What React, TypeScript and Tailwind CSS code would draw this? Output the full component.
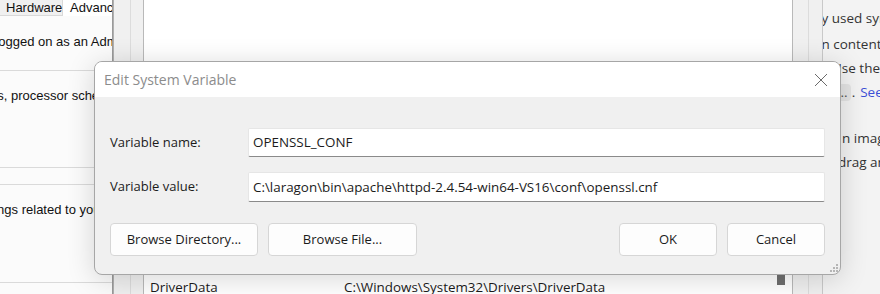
import React from "react";

const ui = { fontFamily: '"Open Sans", "Noto Sans", sans-serif' };
const classic = { fontFamily: '"Liberation Sans", Arial, sans-serif' };

const CloseIcon = () => (
  <svg width="14" height="14" viewBox="0 0 14 14" fill="none">
    <path d="M1 1L13 13M13 1L1 13" stroke="#6b6b6b" strokeWidth="1" />
  </svg>
);

const Grip = () => (
  <svg width="10" height="10" viewBox="0 0 10 10">
    <rect x="7" y="1" width="2" height="2" fill="#b5b5b5" />
    <rect x="4" y="4" width="2" height="2" fill="#b5b5b5" />
    <rect x="7" y="4" width="2" height="2" fill="#b5b5b5" />
    <rect x="1" y="7" width="2" height="2" fill="#b5b5b5" />
    <rect x="4" y="7" width="2" height="2" fill="#b5b5b5" />
    <rect x="7" y="7" width="2" height="2" fill="#b5b5b5" />
  </svg>
);

const Button = ({ label, width }: { label: string; width: string }) => (
  <button
    className={`${width} h-[33px] rounded-[4px] border border-[#d6d6d6] bg-[#fdfdfd] text-[13px] text-[#1b1b1b] flex items-center justify-center`}
  >
    {label}
  </button>
);

export default function App() {
  return (
    <div className="relative w-[880px] h-[294px] overflow-hidden bg-[#f3f3f3]">
      {/* Browser page behind everything */}
      <div
        className="absolute left-[818px] top-0 w-[80px] h-[294px] bg-[#f3f3f3] text-[13.5px] text-[#333] whitespace-nowrap"
        style={ui}
      >
        <div className="pt-[6px] flex flex-col">
          <div className="h-[24px] leading-[24px]">ly used syntax</div>
          <div className="h-[24px] leading-[24px] mt-[2px]">in content</div>
          <div className="h-[24px] leading-[24px] pl-[14px]">Use the</div>
          <div className="h-[24px] leading-[24px] flex items-center pl-[16px]">
            <span className="bg-[#e4e4e4] rounded-[4px] px-[3px] leading-[17px] text-[#555]">...</span>
            <span className="ml-[1px]">.</span>
            <span className="ml-[5px] text-[#3b4fd6]">See</span>
          </div>
          <div className="h-[24px]" />
          <div className="h-[24px] leading-[24px] mt-[-2px] pl-[24px]">n image</div>
          <div className="h-[24px] leading-[24px] pl-[20px]">drag and</div>
        </div>
      </div>

      {/* Environment Variables window */}
      <div className="absolute left-[113px] top-[-20px] w-[710px] h-[340px] bg-[#f0f0f0] border-r border-[#c9c9c9] pr-[13px] flex">
        <div className="w-[17px] border-l border-[#b0b0b0]" />
        <div className="flex-1 flex border-l border-r border-[#dcdcdc] pl-[12px] pr-[15px]">
          <div className="flex-1 bg-white border-l border-r border-[#b9b9b9] flex">
            <div className="flex-1 flex flex-col justify-end pb-[23px]">
              <div className="flex text-[13.4px] text-[#1b1b1b] h-[20px] items-center" style={ui}>
                <span className="w-[200px] pl-[6px]">DriverData</span>
                <span>C:\Windows\System32\Drivers\DriverData</span>
              </div>
            </div>
            <div className="w-[16px] flex flex-col justify-end pb-[35px]">
              <div className="ml-[1px] w-[8px] h-[10px] bg-[#6f6f6f]" />
            </div>
          </div>
        </div>
      </div>

      {/* System Properties window */}
      <div
        className="absolute left-0 top-0 w-[113px] h-[294px] bg-[#fbfbfb] border-r border-[#9a9a9a] text-[13px] text-[#111] whitespace-nowrap overflow-hidden"
        style={classic}
      >
        <div className="flex h-[16px]">
          <div className="w-[63px] h-[16px] bg-[#f0f0f0] border-r border-b border-[#d9d9d9] pl-[6px] leading-[16px]">Hardware</div>
          <div className="pl-[7px] leading-[16px] bg-white">Advanced</div>
        </div>
        <div className="pt-[17px] leading-[18px] ml-[-9px]">Logged on as an Administrator</div>
        <div className="mt-[19px] border-t border-[#dadada]" />
        <div className="pt-[16px] leading-[18px] ml-[-10px]">ps, processor scheduling</div>
        <div className="mt-[62px] border-t border-[#dadada]" />
        <div className="mt-[16px] border-t border-[#dadada]" />
        <div className="pt-[16px] leading-[18px] ml-[-13px]">ttings related to your</div>
        <div className="mt-[63px] border-t border-[#dadada]" />
      </div>

      {/* Edit System Variable dialog */}
      <div
        className="absolute left-[94px] top-[61px] w-[747px] h-[214px] rounded-[8px] border border-[#a6a6a6] bg-[#f0f0f0] shadow-[0_4px_28px_rgba(0,0,0,0.16)] overflow-hidden flex flex-col"
        style={ui}
      >
        <div className="h-[35px] bg-white flex items-center justify-between pl-[9px] pr-[12px]">
          <span className="text-[14px] text-[#8c8c8c]">Edit System Variable</span>
          <CloseIcon />
        </div>
        <div className="relative flex-1 flex flex-col px-[15px] pt-[31px]">
          <div className="flex items-center h-[29px]">
            <span className="w-[138px] text-[13px] text-[#1b1b1b]">Variable name:</span>
            <div className="flex-1 h-full bg-white border border-[#e6e6e6] border-b-[#8a8a8a] rounded-[2px] pl-[4px] flex items-center text-[13.4px] text-[#1b1b1b]">
              OPENSSL_CONF
            </div>
          </div>
          <div className="flex items-center h-[30px] mt-[15px]">
            <span className="w-[138px] text-[13px] text-[#1b1b1b]">Variable value:</span>
            <div className="flex-1 h-full bg-white border border-[#e6e6e6] border-b-[#8a8a8a] rounded-[2px] pl-[4px] flex items-center text-[13.4px] text-[#1b1b1b]">
              C:\laragon\bin\apache\httpd-2.4.54-win64-VS16\conf\openssl.cnf
            </div>
          </div>
          <div className="flex justify-between mt-[21px]">
            <div className="flex gap-[10px]">
              <Button label="Browse Directory..." width="w-[148px]" />
              <Button label="Browse File..." width="w-[149px]" />
            </div>
            <div className="flex gap-[10px]">
              <Button label="OK" width="w-[98px]" />
              <Button label="Cancel" width="w-[98px]" />
            </div>
          </div>
          <div className="absolute right-[1px] bottom-[1px]">
            <Grip />
          </div>
        </div>
      </div>
    </div>
  );
}
